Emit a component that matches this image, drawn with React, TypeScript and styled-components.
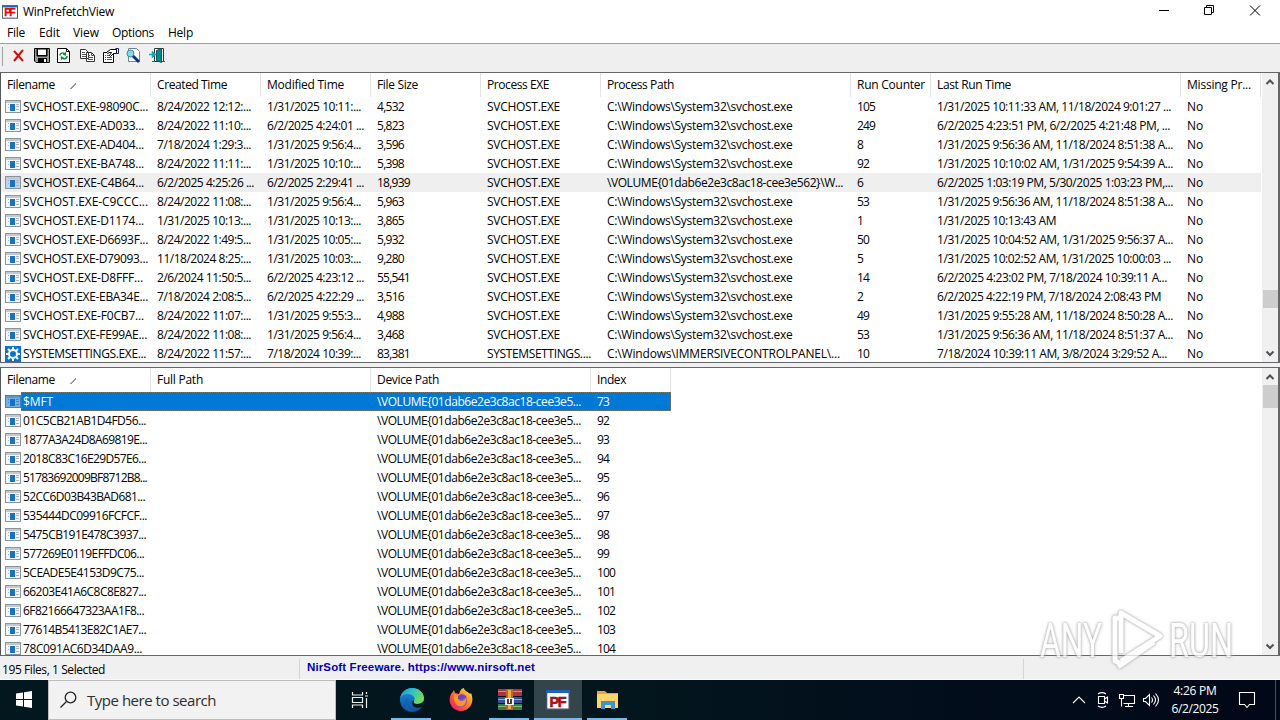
import React, { useLayoutEffect, useRef, useState } from "react";
import styled, { createGlobalStyle, css } from "styled-components";

const Global = createGlobalStyle`
  *{box-sizing:border-box}
  body{margin:0;background:#fff;overflow:hidden}
`;
const Window = styled.main`
  position:relative;display:flex;flex-direction:column;width:1280px;height:720px;overflow:hidden;
  font:12px/19px "Open Sans","Noto Sans",sans-serif;color:#000;background:#f0f0f0;white-space:pre;
`;
const TitleBar = styled.header`display:flex;height:24px;background:#fff;padding:0 10px 1px 2px;align-items:center;`;
const Title = styled.h1`margin:0 auto 0 5px;font:inherit;`;
const WinButtons = styled.div`display:flex;align-self:flex-start;gap:32px;padding:3px 8px 0 0;`;
const MenuBar = styled.nav`display:flex;height:19px;background:#fff;`;
const MenuItem = styled.span<{ $w: number }>`width:${p => p.$w}px;padding-left:7px;line-height:18px;`;
const Toolbar = styled.div`
  display:flex;align-items:center;height:29px;border-top:1px solid #a0a0a0;background:#efefef;padding:0 0 5px;
`;
const Grip = styled.i`width:1px;height:19px;margin:1px 8px 0 2px;background:#a0a0a0;`;
const Tool = styled.span`display:flex;width:23px;height:18px;align-items:center;`;
const Panel = styled.section<{ $h: number }>`
  display:flex;height:${p => p.$h}px;border:1px solid #64666a;border-right-width:2px;background:#fff;overflow:hidden;
  border-left-color:#53565c;
`;
const Table = styled.div`flex:1;overflow:hidden;`;
const Row = styled.div<{ $hot?: boolean }>`display:flex;height:19px;width:1260px;${p => p.$hot && "background:#efefef;"}`;
const HeadRow = styled(Row)`height:24px;`;
const HeadCell = styled.div<{ $w: number }>`
  width:${p => p.$w}px;padding:2px 0 0 6px;line-height:20px;border-right:1px solid #e2e2e2;overflow:hidden;flex:none;
`;
const SortMark = styled.i`display:inline-block;width:6px;height:6px;margin-left:15px;background:linear-gradient(135deg,transparent 42%,#999 42%,#999 60%,transparent 60%);`;
const Cell = styled.div<{ $w: number }>`width:${p => p.$w}px;padding-left:6px;flex:none;`;
const NameCell = styled.div<{ $sel?: boolean }>`
  display:flex;width:150px;flex:none;padding-left:4px;align-items:center;
  ${p => p.$sel && css`background:linear-gradient(#fff,#fff) 0 0/20px 100% no-repeat;`}
`;
const NameText = styled.span`margin-left:2px;`;
const SelectedRow = styled(Row)`
  position:relative;width:670px;background:#0078d7;color:#fff;
  &::after{content:"";position:absolute;inset:0 0 0 20px;border:1px dotted #6f7a70;}
`;
const Scroll = styled.div`display:flex;flex-direction:column;align-items:center;width:16px;background:#f0f0f0;flex:none;`;
const Arrow = styled.svg<{ $end?: boolean }>`width:16px;height:17px;${p => p.$end && "margin-top:auto;"}`;
const Thumb = styled.i<{ $top: number; $h: number }>`width:15px;height:${p => p.$h}px;margin-top:${p => p.$top}px;background:#cdcdcd;`;
const Splitter = styled.div`height:4px;background:#f0f0f0;`;
const Status = styled.footer`display:flex;height:24px;background:#f0f0f0;padding-top:3px;border-bottom:1px solid #fafafa;`;
const StatusCell = styled.div<{ $w: number }>`width:${p => p.$w}px;height:20px;padding:1px 0 0 2px;border-right:1px solid #d5d5d5;`;
const Link = styled(StatusCell)`color:#0000b4;font:bold 11.5px/15px "Liberation Sans",sans-serif;padding:1px 0 0 7px;`;
const Taskbar = styled.footer`display:flex;height:40px;background:linear-gradient(90deg,#02171e,#03151d 50%,#020d1c 75%,#010817);color:#fff;`;
const Start = styled.div`width:48px;padding:11px 0 0 16px;`;
const Search = styled.div`
  display:flex;align-items:center;width:288px;background:#f2f2f2;border:1px solid #bdbdbd;padding-left:11px;gap:10px;
  color:#2e2e2e;font-size:15px;
`;
const Task = styled.div<{ $line?: boolean; $active?: boolean; $w?: number }>`
  display:flex;width:${p => p.$w || 49}px;justify-content:center;align-items:center;position:relative;
  ${p => p.$active && "background:#33444b;"}
  ${p => p.$line && css`&::after{content:"";position:absolute;bottom:0;left:${p.$active ? 0 : p.$w ? 5 : 4}px;right:${p.$active ? 0 : 5}px;height:2px;background:#76b9ed;}`}
`;
const TaskView = styled(Task)`padding-right:4px;`;
const Tray = styled.div`display:flex;align-items:center;margin-left:auto;`;
const Clock = styled.div`width:66px;display:flex;flex-direction:column;align-items:center;line-height:18px;padding-top:0;`;
const TrayIcon = styled.svg<{ $w: number }>`width:${p => p.$w}px;height:20px;fill:none;stroke:#fff;stroke-width:1.1;`;
const Peek = styled.i`width:5px;height:40px;border-left:1px solid #46505c;`;
const Watermark = styled.svg`
  position:absolute;left:1030px;top:600px;width:210px;height:80px;
  filter:drop-shadow(0 0 1px #9a9a9a) drop-shadow(0 0 1.500px #bbb);opacity:.75;
`;
const Stretch = styled.span`display:inline-block;transform-origin:0 50%;`;

/* Spreads its text over a known advance width. */
function Text({ children, w }: { children: string; w: number }) {
  const ref = useRef<HTMLSpanElement>(null);
  const [gap, setGap] = useState(0);
  useLayoutEffect(() => {
    if (ref.current) setGap((w - ref.current.getBoundingClientRect().width) / children.length);
  }, []);
  return <Stretch ref={ref} style={{ letterSpacing: gap }}>{children}</Stretch>;
}

const adv: Record<string, number> = {};
const put = (chars: string, w: number) => { for (const c of chars) adv[c] = w; };
put("0123456789$", 6); put(".,: ", 3); put("/-", 5);
const known: Record<string, number> = {
  "SVCHOST.EXE": 73, "SYSTEMSETTINGS....": 104, "C:\\Windows\\System32\\svchost.exe": 185.5,
  "\\VOLUME{01dab6e2e3c8ac18-cee3e562}\\W...": 236, "C:\\Windows\\IMMERSIVECONTROLPANEL\\...": 233,
  "\\VOLUME{01dab6e2e3c8ac18-cee3e5...": 204, "Filename": 48, "Created Time": 70, "Modified Time": 77,
  "File Size": 41, "Process EXE": 62, "Process Path": 67, "Run Counter": 68, "Last Run Time": 74, "Missing Pr...": 64,
  "Full Path": 46, "Device Path": 62, "Index": 29, "WinPrefetchView": 91, "File": 18, "Edit": 21, "View": 26, "Options": 42, "Help": 25,
  "195 Files, 1 Selected": 103, "Type here to search": 129, "No": 16, "4:26 PM": 43, "6/2/2025": 47,
  "NirSoft Freeware. https://www.nirsoft.net": 228,
};
const T = ({ s, w }: { s: string; w?: number }) => (
  <Text w={w ?? known[s] ?? [...s].reduce((n, c) => n + (adv[c] ?? 6), 0)}>{s}</Text>
);

const cols: [string, number][] = [["Filename", 150], ["Created Time", 110], ["Modified Time", 110], ["File Size", 110], ["Process EXE", 120], ["Process Path", 250], ["Run Counter", 80], ["Last Run Time", 250], ["Missing Pr...", 80]];
const svc = "SVCHOST.EXE", path = "C:\\Windows\\System32\\svchost.exe";
type Rec = [string, number, string, string, string, string, string, number];
const rows: Rec[] = [
  ["SVCHOST.EXE-98090C...", 125, "8/24/2022 12:12:...", "1/31/2025 10:11:...", "4,532", "105", "1/31/2025 10:11:33 AM, 11/18/2024 9:01:27 ...", 234],
  ["SVCHOST.EXE-AD033...", 121, "8/24/2022 11:10:...", "6/2/2025 4:24:01 ...", "5,823", "249", "6/2/2025 4:23:51 PM, 6/2/2025 4:21:48 PM, ...", 233],
  ["SVCHOST.EXE-AD404...", 121, "7/18/2024 1:29:3...", "1/31/2025 9:56:4...", "3,596", "8", "1/31/2025 9:56:36 AM, 11/18/2024 8:51:38 A...", 236],
  ["SVCHOST.EXE-BA748...", 121, "8/24/2022 11:11:...", "1/31/2025 10:10:...", "5,398", "92", "1/31/2025 10:10:02 AM, 1/31/2025 9:54:39 A...", 236],
  ["SVCHOST.EXE-C4B64...", 121, "6/2/2025 4:25:26 ...", "6/2/2025 2:29:41 ...", "18,939", "6", "6/2/2025 1:03:19 PM, 5/30/2025 1:03:23 PM,...", 236],
  ["SVCHOST.EXE-C9CCC...", 125, "8/24/2022 11:08:...", "1/31/2025 9:56:4...", "5,963", "53", "1/31/2025 9:56:36 AM, 11/18/2024 8:51:38 A...", 236],
  ["SVCHOST.EXE-D1174...", 121, "1/31/2025 10:13:...", "1/31/2025 10:13:...", "3,865", "1", "1/31/2025 10:13:43 AM", 119],
  ["SVCHOST.EXE-D6693F...", 125, "8/24/2022 1:49:5...", "1/31/2025 10:05:...", "5,932", "50", "1/31/2025 10:04:52 AM, 1/31/2025 9:56:37 A...", 236],
  ["SVCHOST.EXE-D79093...", 125, "11/18/2024 8:25:...", "1/31/2025 10:03:...", "9,280", "5", "1/31/2025 10:02:52 AM, 1/31/2025 10:00:03 ...", 234],
  ["SVCHOST.EXE-D8FFF...", 120, "2/6/2024 11:50:5...", "6/2/2025 4:23:12 ...", "55,541", "14", "6/2/2025 4:23:02 PM, 7/18/2024 10:39:11 A...", 230],
  ["SVCHOST.EXE-EBA34E...", 125, "7/18/2024 2:08:5...", "6/2/2025 4:22:29 ...", "3,516", "2", "6/2/2025 4:22:19 PM, 7/18/2024 2:08:43 PM", 224],
  ["SVCHOST.EXE-F0CB7...", 121, "8/24/2022 11:07:...", "1/31/2025 9:55:3...", "4,988", "49", "1/31/2025 9:55:28 AM, 11/18/2024 8:50:28 A...", 236],
  ["SVCHOST.EXE-FE99AE...", 124, "8/24/2022 11:08:...", "1/31/2025 9:56:4...", "3,468", "53", "1/31/2025 9:56:36 AM, 11/18/2024 8:51:37 A...", 236],
  ["SYSTEMSETTINGS.EXE...", 123, "8/24/2022 11:57:...", "7/18/2024 10:39:...", "83,381", "10", "7/18/2024 10:39:11 AM, 3/8/2024 3:29:52 A...", 230],
];
const files: [string, string, number][] = [
  ["$MFT", "73", 30], ["01C5CB21AB1D4FD56...", "92", 123], ["1877A3A24D8A69819E...", "93", 124], ["2018C83C16E29D57E6...", "94", 123],
  ["51783692009BF8712B8...", "95", 124], ["52CC6D03B43BAD681...", "96", 122], ["535444DC09916FCFCF...", "97", 124], ["5475CB191E478C3937...", "98", 123],
  ["577269E0119EFFDC06...", "99", 121], ["5CEADE5E4153D9C75...", "100", 121], ["66203E41A6C8C8E827...", "101", 123], ["6F82166647323AA1F8...", "102", 121],
  ["77614B5413E82C1AE7...", "103", 123], ["78C091AC6D34DAA9...", "104", 119],
];

const AppIcon = ({ sel, dim }: { sel?: boolean; dim?: boolean }) => (
  <svg width="16" height="16" viewBox="0 0 16 16" shapeRendering="crispEdges">
    <path d="M0 1h16v13H0z" fill={sel ? "#4681af" : "#8c949b"} /><path d="M1 4h14v9H1z" fill={sel ? "#76b0df" : dim ? "#b9d6ee" : "#f6f7f8"} />
    <path d="M1 2h14v2H1z" fill={sel ? "#5b99ca" : "#c3c9ce"} /><path d="M5 5h5v7H5z" fill="#1672c4" />
    <path d="M3 5h1v1H3zm0 3h1v1H3zM11 5h3v1h-3zm0 2h3v1h-3zm0 3h3v1h-3z" fill={sel ? "#408bc4" : "#aab3bb"} />
  </svg>
);
const GearIcon = () => (
  <svg width="16" height="16" viewBox="0 0 16 16"><path d="M0 0h16v16H0z" fill="#0875ca" />
    <g stroke="#fff" strokeWidth="2" fill="none"><circle cx="8" cy="8" r="4" />
      <path d="M8 1v2.500M8 12.500V15M1 8h2.500M12.500 8H15M3 3l2 2M11 11l2 2M13 3l-2 2M5 11l-2 2" /></g></svg>
);
const PfIcon = ({ big }: { big?: boolean }) => (
  <svg width={big ? 24 : 16} height={big ? 24 : 16} viewBox="0 0 24 24">
    <path d="M0 2h24v20H0z" fill="#41506b" /><path d="M0 2h24v3H0z" fill="#1b63c0" /><path d="M1.300 5h21.200v15.500H1.300z" fill="#fff" />
    <text x="12" y="18.500" textAnchor="middle" textLength="17" fontFamily="Liberation Sans" fontWeight="700" fontSize={big ? 14.5 : 15.5} fill="#e1060b" stroke={big ? "#40100f" : "#e1060b"} strokeWidth=".5">PF</text>
  </svg>
);
const Ico = ({ children }: { children: React.ReactNode }) => (
  <Tool><svg width="17" height="17" viewBox="0 0 17 17" fill="none" stroke="#000">{children}</svg></Tool>
);
const ScrollArrow = ({ down }: { down?: boolean }) => (
  <Arrow $end={down} viewBox="0 0 16 17"><path d={down ? "M4.500 6.500 8 10l3.500-3.500" : "M4.500 11 8 7.500l3.500 3.500"} fill="none" stroke="#505050" strokeWidth="2" /></Arrow>
);

export default function App() {
  return <Window><Global />
    <TitleBar><PfIcon /><Title><T s="WinPrefetchView" /></Title>
      <WinButtons>
        <svg width="14" height="14" stroke="#000" fill="none"><path d="M3 7.500h10" /></svg>
        <svg width="14" height="14" stroke="#000" fill="none"><path d="M2.500 4.500h7v7h-7zM4.500 4.500v-2h7v7h-2" /></svg>
        <svg width="14" height="14" stroke="#000" fill="none"><path d="m2 2.500 10 10m0-10-10 10" /></svg>
      </WinButtons></TitleBar>
    <MenuBar>{([["File", 32], ["Edit", 34], ["View", 39], ["Options", 56], ["Help", 40]] as [string, number][]).map(([s, w]) => <MenuItem $w={w} key={s}><T s={s} /></MenuItem>)}</MenuBar>
    <Toolbar><Grip />
      <Ico><path d="m3 4 9 10M12 3 3 14" stroke="#d30d12" strokeWidth="2" /></Ico>
      <Ico><path d="M.5 1.500h15v14H2l-1.500-1.500z" fill="#9a9a9a" /><path d="M3 2h10v7H3z" fill="#fff" /><path d="M3.500 2v6.500h9V2" /><path d="M4 11h9v5H4z" fill="#000" stroke="none" /><path d="M10 12h2v3h-2z" fill="#fff" stroke="none" /></Ico>
      <Ico><path d="M.5 1.500h9l3 3v11H.5z" fill="#fff" /><path d="M9.500 1.500v3h3" /><path d="M3 8.500c0-3 4-3 5-1M10 9c0 3.500-4 3.500-5.500 1.500" stroke="#15863b" strokeWidth="1.500" /><path d="M9 4.500V9L5.800 7.500zM3.800 9v4.500l3-3z" fill="#15863b" stroke="none" /></Ico>
      <Ico><path d="M.5 2.500h5l3 3v6h-8zM6.500 5.500h5l3 3v6h-8z" fill="#fff" stroke="#333" /><path d="M2 5.500h3m-3 2h4m-4 2h4M8 8.500h2m-2 2h5m-5 2h5M11.500 5.500v3h3" stroke="#555" /></Ico>
      <Ico><path d="M.5 5.500h10v10H.5z" fill="#fff" /><path d="M2 8.500h1m1 0h4m-6 2h1m1 0h5m-7 2h1m1 0h5" stroke="#555" /><path d="m3.500 5.500 4-3h6v4h-3l-3 3-1-1 2-3h-2l-2 1z" fill="#fff" /><path d="M12.500 1.500h3v5h-2" stroke="#17206f" /></Ico>
      <Ico><path d="M2.500 1.500h8l3 3v10h-11z" fill="#fff" stroke="#6686a0" /><circle cx="4.500" cy="6.500" r="3.500" fill="#82dce1" stroke="#57798b" /><path d="m7 9 6 6" stroke="#0b2e8d" strokeWidth="2.800" /></Ico>
      <Ico><path d="M5.500 1.500h9v13h-9z" fill="#fff" stroke="#333" /><path d="m7.500 3.500 5-2v14l-5-2z" fill="#08888d" stroke="#14575c" /><path d="M0 7.500h5M3.500 5l3 2.500-3 2.500z" fill="#11b8d0" stroke="#11a5bf" strokeWidth="1.500" /><path d="M3 14.500h3M13 14.500h3" stroke="#555" /></Ico>
    </Toolbar>
    <Panel $h={291}><Table>
      <HeadRow>{cols.map(([s, w], i) => <HeadCell $w={w} key={s}><T s={s} />{i === 0 && <SortMark />}</HeadCell>)}</HeadRow>
      {rows.map((r, i) => <Row $hot={i === 4} key={r[0]}>
        <NameCell>{i === 13 ? <GearIcon /> : <AppIcon dim={i === 4} />}<NameText><T s={r[0]} w={r[1]} /></NameText></NameCell>
        <Cell $w={110}><T s={r[2]} w={r[2].startsWith("6") ? 97 : 94} /></Cell>
        <Cell $w={110}><T s={r[3]} w={r[3].startsWith("6") ? 97 : 94} /></Cell><Cell $w={110}><T s={r[4]} /></Cell>
        <Cell $w={120}><T s={i === 13 ? "SYSTEMSETTINGS...." : svc} /></Cell>
        <Cell $w={250}><T s={i === 4 ? "\\VOLUME{01dab6e2e3c8ac18-cee3e562}\\W..." : i === 13 ? "C:\\Windows\\IMMERSIVECONTROLPANEL\\..." : path} /></Cell>
        <Cell $w={80}><T s={r[5]} /></Cell><Cell $w={250}><T s={r[6]} w={r[7]} /></Cell><Cell $w={80}><T s="No" /></Cell>
      </Row>)}
    </Table><Scroll><ScrollArrow /><Thumb $top={200} $h={18} /><ScrollArrow down /></Scroll></Panel>
    <Splitter />
    <Panel $h={289}><Table>
      <HeadRow>{([["Filename", 150], ["Full Path", 220], ["Device Path", 220], ["Index", 80]] as [string, number][]).map(([s, w], i) => <HeadCell $w={w} key={s}><T s={s} />{i === 0 && <SortMark />}</HeadCell>)}</HeadRow>
      {files.map(([s, n, w], i) => { const R = i ? Row : SelectedRow; return <R key={s}>
        <NameCell $sel={!i}><AppIcon sel={!i} /><NameText><T s={s} w={w} /></NameText></NameCell><Cell $w={220} />
        <Cell $w={220}><T s="\VOLUME{01dab6e2e3c8ac18-cee3e5..." /></Cell><Cell $w={80}><T s={n} /></Cell>
      </R>; })}
    </Table><Scroll><ScrollArrow /><Thumb $top={0} $h={23} /><ScrollArrow down /></Scroll></Panel>
    <Status><StatusCell $w={300}><T s="195 Files, 1 Selected" /></StatusCell><Link $w={724}><T s="NirSoft Freeware. https://www.nirsoft.net" /></Link></Status>
    <Taskbar><Start><svg width="16" height="17" viewBox="0 0 16 17" fill="#fff"><path d="m0 2.500 7-1v6.500H0zM8 1.300 16 0v8H8zM0 9h7v6.500l-7-1zM8 9h8v8l-8-1.300z" /></svg></Start>
      <Search><svg width="17" height="18" fill="none" stroke="#222" strokeWidth="1.300"><circle cx="10.500" cy="6.500" r="5.300" /><path d="m6.500 10.500-6 6" /></svg><T s="Type here to search" /></Search>
      <TaskView $w={51}><svg width="18" height="18" fill="none" stroke="#eee" strokeWidth="1.200"><path d="M1.500 1v3h10V1M1.500 17v-3h10v3M1.500 6.500h10v5h-10zM15.500 1v2M15.500 7v10M14 5h3" /></svg></TaskView>
      <Task $line><svg width="26" height="26" viewBox="0 0 26 26"><defs>
        <linearGradient id="eg" x1="0" y1="0" x2="1" y2=".5"><stop stopColor="#178ed4" /><stop offset=".5" stopColor="#2fc2c9" /><stop offset="1" stopColor="#70db58" /></linearGradient>
        <linearGradient id="eb" x1="0" y1="0" x2="0" y2="1"><stop stopColor="#1c91dc" /><stop offset="1" stopColor="#0d4c9e" /></linearGradient></defs>
        <circle cx="13" cy="13" r="12" fill="url(#eb)" /><path d="M1 12C2 5 7 1 13 1c7 0 12 5 12 10 0 4-3 6-7 6-3 0-4-1-3-3 2-4-2-7-6-7-4 0-7 2-8 5z" fill="url(#eg)" />
        <path d="M15 14c-1 2 0 3 3 3 3 0 5-1 7-3v3l-2 3c-5 2-10 0-10-4 0-2 1-3 2-2z" fill="#071a25" /><path d="M10 11c-4 3-2 11 5 13-6 1-9-3-9-7s2-6 4-6z" fill="#1062af" /></svg></Task>
      <Task><svg width="24" height="24" viewBox="0 0 24 24"><defs><linearGradient id="ff" x1="1" y1="0" x2="0" y2="1"><stop stopColor="#fff34f" /><stop offset=".4" stopColor="#ff8b20" /><stop offset=".75" stopColor="#fb3850" /><stop offset="1" stopColor="#e31587" /></linearGradient></defs>
        <path d="M3 5 5 2l1 3 4 1c1-4 3-6 5-6 0 3 5 4 6 6l1-1c4 9-1 18-10 18C3 23-2 14 2 6z" fill="url(#ff)" /><circle cx="12" cy="13" r="6" fill="#8052d8" /><path d="M5 7c4-1 5 1 8 1 0 3-3 2-3 4 2 2 5 1 7-2 1 5-2 9-6 8-4 0-7-5-6-11z" fill="#ff9821" /><path d="M9 8c3-3 8-2 9 2-2-1-3 0-5 1-2 0-2 1-4 0z" fill="#7141c2" /></svg></Task>
      <Task $line><svg width="24" height="24" viewBox="0 0 24 24"><path d="M0 1h24v7H0z" fill="#ad363d" /><path d="M0 3h24v1H0z" fill="#de858c" /><path d="M0 9h24v6H0z" fill="#394fa2" /><path d="M0 11h24v1H0z" fill="#94a0d7" /><path d="M0 16h24v6H0z" fill="#377b48" /><path d="M0 18h24v1H0z" fill="#87b977" /><path d="M8 1h7v21H8z" fill="#b96720" /><path d="M10 2h3v19h-3z" fill="#efaa4b" /><path d="M7 10h9v7H7z" fill="#eee" /><path d="M9 11h5v5H9z" fill="#4a3930" /><path d="M11 10h1v5h-1z" fill="#fff" /></svg></Task>
      <Task $line $active $w={48}><PfIcon big /></Task>
      <Task $line $w={50}><svg width="23" height="23" viewBox="0 0 23 23"><path d="M1 2h8l2 2h11v15H1z" fill="#e5a83b" /><path d="M1 5h21v14H1z" fill="#ffd46b" /><path d="M5 20v-8h14v8h-4v-4H9v4z" fill="#3c94d1" /></svg></Task>
      <Tray>
        <TrayIcon $w={24} viewBox="0 0 24 20"><path d="m6 13 6-6 6 6" /></TrayIcon>
        <TrayIcon $w={24} viewBox="0 0 24 20"><path d="M7.500 6.500h6v7h-6zM13.500 9l3-2v6l-3-2M7 4c3-2 5-2 8 0M7 16c3 2 5 2 8 0" /></TrayIcon>
        <TrayIcon $w={25} viewBox="0 0 25 20"><path d="M8.500 5.500h11v8h-11M13.500 13.500v3M10 16.500h8M4.500 4.500h4v4h-4zM6.500 8.500v8" /></TrayIcon>
        <TrayIcon $w={22} viewBox="0 0 22 20"><path d="M3.500 8.500h2l4-4v11l-4-4h-2zM11.500 7.500q2 2.500 0 5M13.500 5.500q4 4.500 0 9M15.500 3.500q6 6.500 0 13" /></TrayIcon>
        <Clock><T s="4:26 PM" /><T s="6/2/2025" /></Clock>
        <TrayIcon $w={47} viewBox="0 0 47 20"><path d="M11.500 2.500h15v12h-5l-2.500 3-2.500-3h-5z" /></TrayIcon><Peek />
      </Tray>
    </Taskbar>
    <Watermark viewBox="0 0 210 80">
      <g fill="#fff" fontFamily="Roboto,sans-serif" fontSize="48">
        <text x="10" y="57" textLength="62" lengthAdjust="spacingAndGlyphs">ANY</text>
        <text x="139" y="57" textLength="64" lengthAdjust="spacingAndGlyphs">RUN</text>
      </g>
      <path d="M91 18h-6v43l7 3M91 53V13l39 23-39 25M124 42 88 67" fill="none" stroke="#fff" strokeWidth="5" strokeLinejoin="round" />
    </Watermark>
  </Window>;
}
